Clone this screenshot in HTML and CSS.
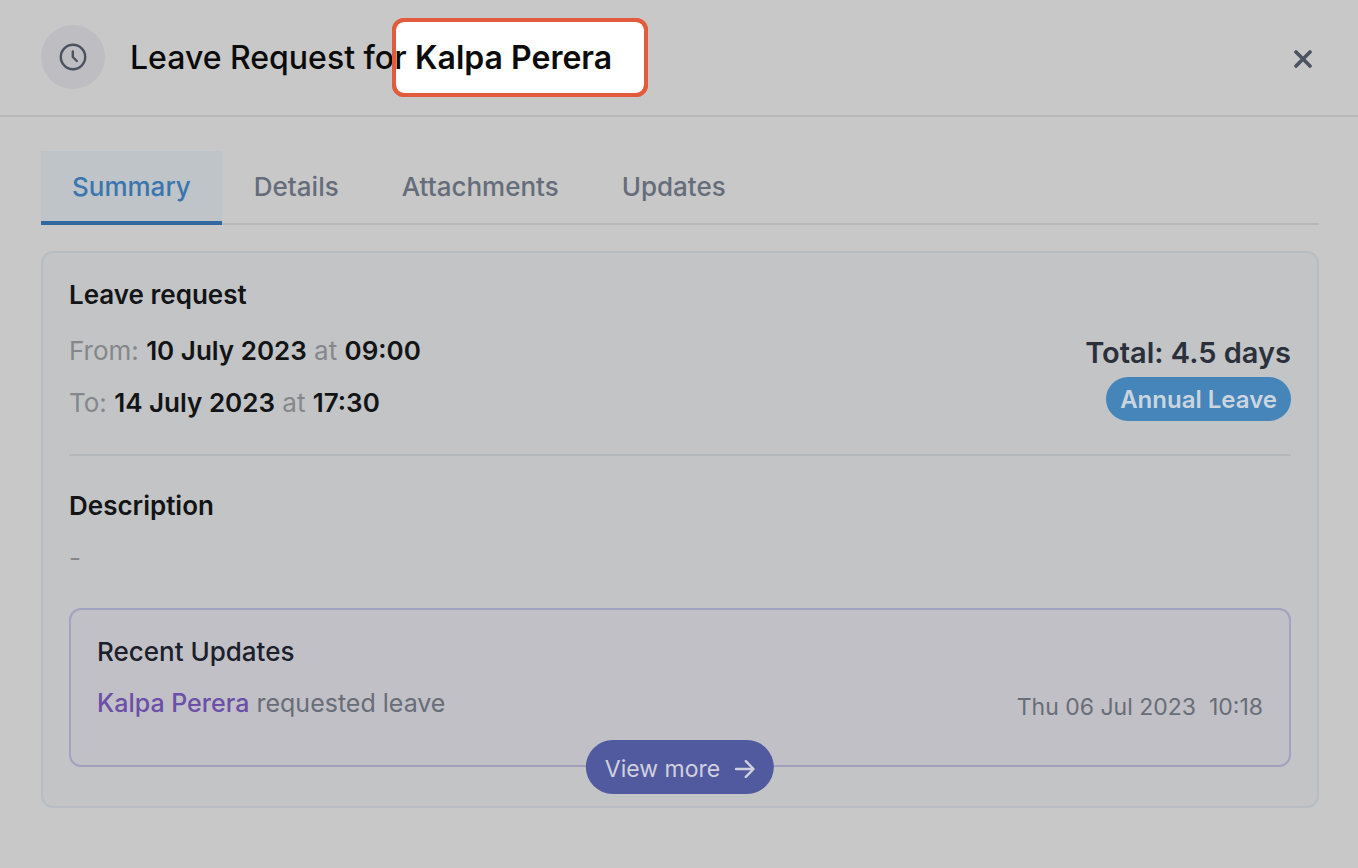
FILE: index.html
```html
<!DOCTYPE html>
<html lang="en">
<head>
<meta charset="utf-8">
<meta name="viewport" content="width=device-width, initial-scale=1">
<title>Leave Request for Kalpa Perera</title>
<link rel="stylesheet" href="styles.css">
</head>
<body>
<header class="header">
  <span class="header-icon">
    <svg width="32" height="32" viewBox="0 0 32 32" fill="none" stroke="currentColor" stroke-width="2.4" stroke-linecap="round" stroke-linejoin="round" aria-hidden="true"><circle cx="16" cy="16" r="12.2"/><path d="M15.800 10.500V16l4 4"/></svg>
  </span>
  <h1 class="title">Leave Request for <span class="highlight">Kalpa Perera</span></h1>
  <button class="close" type="button" aria-label="Close">
    <svg width="18" height="18" viewBox="0 0 18 18" fill="none" stroke="currentColor" stroke-width="3.6" stroke-linecap="round" aria-hidden="true"><path d="M2 2l14 14M16 2L2 16"/></svg>
  </button>
</header>
<main class="content">
  <nav class="tabs" aria-label="Leave request sections">
    <button class="tab tab-active" type="button">Summary</button>
    <button class="tab" type="button">Details</button>
    <button class="tab" type="button">Attachments</button>
    <button class="tab" type="button">Updates</button>
  </nav>
  <section class="card">
    <h2 class="heading">Leave request</h2>
    <div class="request">
      <div class="dates">
        <p class="line">From: <strong>10 July 2023</strong> at <strong>09:00</strong></p>
        <p class="line">To: <strong>14 July 2023</strong> at <strong>17:30</strong></p>
      </div>
      <div class="summary">
        <p class="total">Total: 4.5 days</p>
        <span class="badge">Annual Leave</span>
      </div>
    </div>
    <h2 class="heading">Description</h2>
    <p class="description">-</p>
    <section class="updates">
      <h3 class="updates-title">Recent Updates</h3>
      <div class="update">
        <p class="update-text"><a class="person" href="#">Kalpa Perera</a> requested leave</p>
        <time class="update-time" datetime="2023-07-06T10:18">Thu 06 Jul 2023&nbsp; 10:18</time>
      </div>
      <button class="more" type="button">View more
        <svg width="20" height="18" viewBox="0 0 20 18" fill="none" stroke="currentColor" stroke-width="2.4" stroke-linecap="round" stroke-linejoin="round" aria-hidden="true"><path d="M1.200 9h17.400M11 1.200l7.800 7.800L11 16.800"/></svg>
      </button>
    </section>
  </section>
</main>
</body>
</html>
```
FILE: styles.css
```css
* { box-sizing: border-box; }

body {
  margin: 0;
  background: #c8c8c8;
  color: #131416;
  font: 26px/36px Inter, "Liberation Sans", sans-serif;
}

h1, h2, h3, p { margin: 0; }

button {
  border: 0;
  background: none;
  font: inherit;
  color: inherit;
  cursor: pointer;
}

.header {
  display: flex;
  align-items: center;
  gap: 25px;
  padding: 25px 41px 26px;
  border-bottom: 2px solid #b9b9ba;
}

.header-icon {
  display: flex;
  align-items: center;
  justify-content: center;
  width: 64px;
  height: 64px;
  border-radius: 50%;
  background: #bebdc2;
  color: #4b5260;
}

.title {
  flex: 1;
  isolation: isolate;
  padding-top: 2px;
  font-size: 32px;
  line-height: 40px;
  font-weight: 500;
  color: #0b0b0b;
}

.highlight {
  position: relative;
  font-weight: 600;
}

.highlight::before,
.highlight::after {
  content: "";
  position: absolute;
  inset: -20px -36px -20px -23px;
  border: 4px solid #e15b3c;
  border-radius: 12px;
}

.highlight::before {
  z-index: -1;
  background: #fff;
}

.close {
  display: flex;
  padding: 8px 5px 4px;
  color: #4b5260;
}

.content { padding: 34px 39px 61px 41px; }

.tabs {
  display: flex;
  gap: 1px;
  border-bottom: 2px solid #b7b8ba;
}

.tab {
  margin-bottom: -2px;
  padding: 18px 31px 16px;
  border-bottom: 4px solid transparent;
  font-weight: 500;
  color: #666d7a;
}

.tab-active {
  border-color: #31689f;
  background: #bfc4c8;
  color: #3a76ad;
}

.card {
  margin-top: 26px;
  padding: 24px 26px 39px;
  border: 2px solid #b8bdc3;
  border-radius: 12px;
  background: #c2c4c6;
}

.heading {
  font-size: 26px;
  font-weight: 600;
}

.request {
  display: flex;
  justify-content: space-between;
  margin: 20px 0 32px;
  padding-bottom: 33px;
  border-bottom: 2px solid #b5b8bb;
}

.dates {
  display: grid;
  gap: 15px;
}

.line { color: #85878b; }

.line strong {
  font-weight: 600;
  color: #131416;
}

.summary { text-align: right; }

.total {
  margin-top: 2px;
  font-size: 29px;
  font-weight: 600;
  color: #2c303b;
}

.badge {
  display: inline-block;
  margin-top: 6px;
  padding: 5px 14px 3px;
  border-radius: 22px;
  background: #4585ba;
  color: #cbd5df;
  font-size: 24px;
  font-weight: 600;
}

.description {
  margin-top: 16px;
  color: #85878b;
}

.updates {
  position: relative;
  margin-top: 32px;
  padding: 24px 26px 44px;
  border: 2px solid #a2a2c0;
  border-radius: 12px;
  background: #c1c0c6;
}

.updates-title {
  font-size: 26px;
  font-weight: 500;
  color: #1b202b;
}

.update {
  display: flex;
  justify-content: space-between;
  align-items: flex-end;
  margin-top: 15px;
}

.update-text {
  font-size: 25px;
  color: #686d78;
}

.person {
  font-weight: 500;
  color: #6b4fa8;
  text-decoration: none;
}

.update-time {
  font-size: 23px;
  line-height: 28px;
  color: #686d78;
}

.more {
  position: absolute;
  left: 50%;
  bottom: -2px;
  transform: translate(-50%, 50%);
  display: flex;
  align-items: center;
  gap: 15px;
  padding: 11px 19px 7px;
  border-radius: 28px;
  background: #515a9e;
  color: #d0d1de;
  font-size: 23px;
  white-space: nowrap;
}
```
